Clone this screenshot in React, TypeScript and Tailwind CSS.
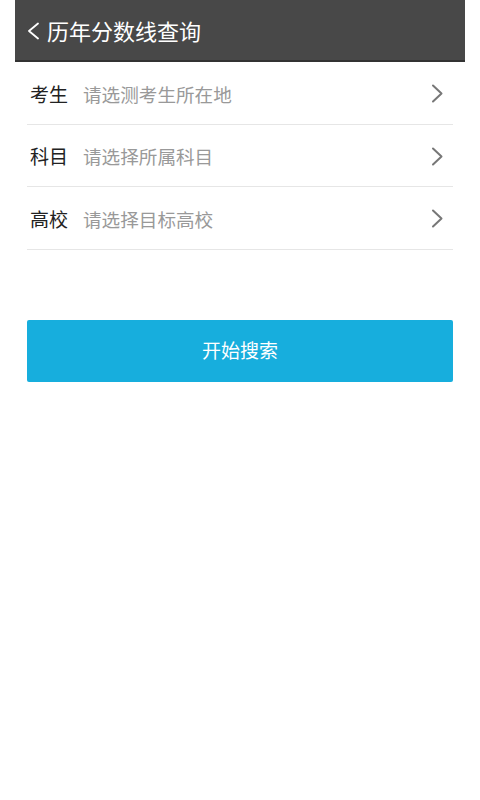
const rows = [
  { label: "考生", hint: "请选测考生所在地" },
  { label: "科目", hint: "请选择所属科目" },
  { label: "高校", hint: "请选择目标高校" },
]

export default function App() {
  return (
    <div
      className="min-h-[800px] w-[480px] bg-white"
      style={{ fontFamily: '"Noto Sans CJK SC", "Noto Sans", sans-serif' }}
    >
      <div className="mx-[15px] bg-white">
        {/* Header */}
        <div className="flex h-[62px] items-center border-b-2 border-[#333] bg-[#484848] pl-[12px] text-white">
          <svg width="12" height="18" viewBox="0 0 12 18" fill="none" className="mt-[1px]">
            <polyline
              points="11,1.5 2,9 11,16.5"
              stroke="white"
              strokeWidth="1.8"
              strokeLinecap="round"
              strokeLinejoin="round"
            />
          </svg>
          <h1 className="ml-[8px] text-[22px] leading-none">历年分数线查询</h1>
        </div>

        {/* Form rows */}
        <div className="px-3">
          {rows.map((r) => (
            <div
              key={r.label}
              className="flex h-[62.5px] items-center border-b border-[#e6e6e6] pl-[3px] pt-[2px]"
            >
              <span className="text-[19px] text-[#222]">{r.label}</span>
              <span className="ml-[15px] flex-1 text-[18.6px] text-[#999]">{r.hint}</span>
              <svg width="12" height="19" viewBox="0 0 12 19" fill="none" className="mr-[10px]">
                <polyline
                  points="2,1.5 10.5,9.5 2,17.5"
                  stroke="#777"
                  strokeWidth="2"
                  strokeLinecap="round"
                  strokeLinejoin="round"
                />
              </svg>
            </div>
          ))}
        </div>

        {/* Search button */}
        <div className="px-3 pt-[70px]">
          <button className="flex h-[62px] w-full items-center justify-center rounded-[2px] bg-[#17aedd] text-[19px] text-white">
            开始搜索
          </button>
        </div>
      </div>
    </div>
  )
}
